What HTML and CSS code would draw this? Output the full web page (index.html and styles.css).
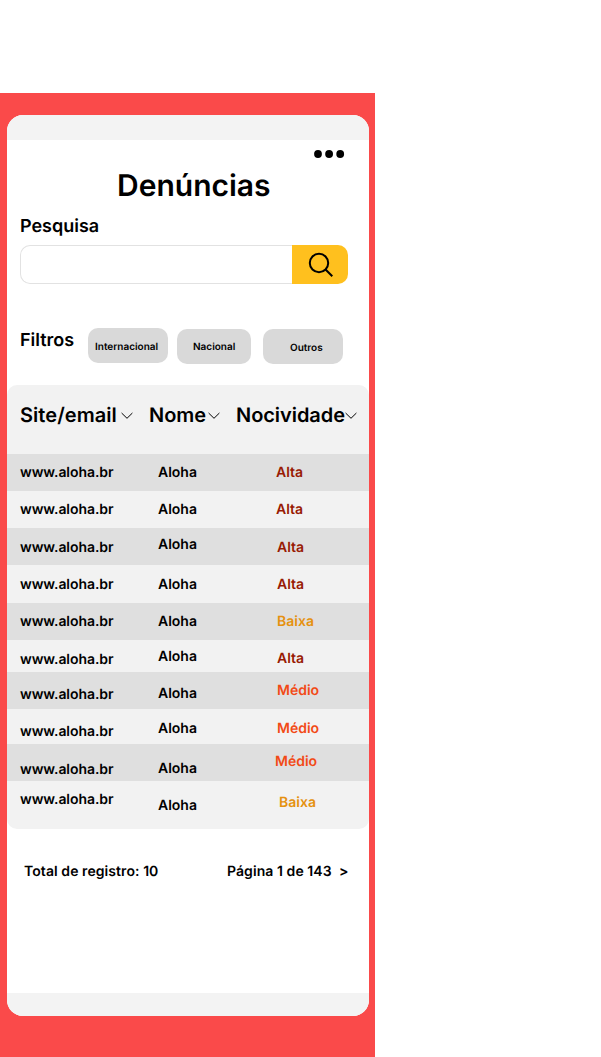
FILE: index.html
```html
<!DOCTYPE html>
<html lang="pt-BR">
<head>
<meta charset="utf-8">
<title>Denúncias</title>
<link rel="stylesheet" href="styles.css">
</head>
<body>
<div class="stage">
  <main class="card">
    <div class="bar bar-top"></div>
    <div class="menu"><svg width="32" height="10" viewBox="0 0 32 10"><circle cx="5" cy="5" r="3.9"/><circle cx="16.1" cy="5" r="3.9"/><circle cx="27.2" cy="5" r="3.9"/></svg></div>
    <h1>Denúncias</h1>
    <h2 class="search-label">Pesquisa</h2>
    <div class="search">
      <div class="search-field"></div>
      <div class="search-button"><svg width="26" height="26" viewBox="0 0 26 26"><circle cx="11" cy="11" r="9.2"/><path d="M17.3 17.3L24.3 24.3"/></svg></div>
    </div>
    <div class="filters">
      <h2>Filtros</h2>
      <div class="pill pill-int">Internacional</div>
      <div class="pill pill-nac">Nacional</div>
      <div class="pill pill-out">Outros</div>
    </div>
    <section class="table">
      <div class="head">
        <span class="h-site">Site/email</span><svg class="chev chev-site" width="12" height="8" viewBox="0 0 12 8"><path d="M.6 1L6 6.3L11.4 1"/></svg>
        <span class="h-nome">Nome</span><svg class="chev chev-nome" width="12" height="8" viewBox="0 0 12 8"><path d="M.6 1L6 6.3L11.4 1"/></svg>
        <span class="h-noc">Nocividade</span><svg class="chev" width="12" height="8" viewBox="0 0 12 8"><path d="M.6 1L6 6.3L11.4 1"/></svg>
      </div>
      <div class="row r37 dark"><span class="site t9">www.aloha.br</span><span class="t9">Aloha</span><span class="t9 x1 alta">Alta</span></div>
      <div class="row r37"><span class="site t9">www.aloha.br</span><span class="t9">Aloha</span><span class="t9 x1 alta">Alta</span></div>
      <div class="row r37 dark"><span class="site t10">www.aloha.br</span><span class="t7">Aloha</span><span class="t10 x2 alta">Alta</span></div>
      <div class="row r38"><span class="site t10">www.aloha.br</span><span class="t10">Aloha</span><span class="t10 x2 alta">Alta</span></div>
      <div class="row r37 dark"><span class="site t9">www.aloha.br</span><span class="t9">Aloha</span><span class="t9 x2 baixa">Baixa</span></div>
      <div class="row r32"><span class="site t10">www.aloha.br</span><span class="t7">Aloha</span><span class="t9 x2 alta">Alta</span></div>
      <div class="row r37 dark"><span class="site t13">www.aloha.br</span><span class="t12">Aloha</span><span class="t9 x2 medio">Médio</span></div>
      <div class="row r35"><span class="site t13">www.aloha.br</span><span class="t10">Aloha</span><span class="t10 x2 medio">Médio</span></div>
      <div class="row r37 dark"><span class="site t16">www.aloha.br</span><span class="t15">Aloha</span><span class="t8 x0 medio">Médio</span></div>
      <div class="row r48"><span class="site t9">www.aloha.br</span><span class="t15">Aloha</span><span class="t12 x4 baixa">Baixa</span></div>
    </section>
    <footer class="pager"><span>Total de registro: 10</span><span class="page">Página 1 de 143&nbsp; &gt;</span></footer>
    <div class="bar bar-bottom"></div>
  </main>
</div>
</body>
</html>
```

FILE: styles.css
```css
* { box-sizing: border-box; }
body { margin: 0; padding-top: 93px; background: #fff; color: #000; font-family: Inter, sans-serif; font-weight: 600; text-rendering: geometricPrecision; }
h1, h2 { margin: 0; font-weight: 600; white-space: nowrap; }
h2 { font-size: 18px; line-height: 22px; }
.stage { width: 375px; height: 964px; padding: 22px 6px 0 7px; background: #fa4a4a; }
.card { display: flex; flex-direction: column; height: 901px; border-radius: 16px; overflow: hidden; background: #fff; }
.bar { flex: none; background: #f3f3f3; }
.bar-top { height: 25px; }
.bar-bottom { height: 23px; margin-top: auto; }
.menu { display: flex; height: 25px; padding: 9px 0 0 306px; }
h1 { height: 40px; padding-left: 110px; font-size: 30px; line-height: 42px; }
.search-label { margin: 11px 0 7px 13px; }
.search { display: flex; width: 328px; height: 39px; margin-left: 13px; }
.search-field { flex: 1; border: 1px solid #e2e2e2; border-right: 0; border-radius: 10px 0 0 10px; }
.search-button { width: 56px; padding: 7px 0 0 16px; border-radius: 0 10px 10px 0; background: #ffc01e; }
.search-button svg { display: block; fill: none; stroke: #000; stroke-width: 2; }
.filters { display: flex; height: 37px; margin-top: 44px; padding-left: 13px; }
.filters h2 { width: 68px; padding-top: 2px; }
.pill { height: 35px; border-radius: 10px; background: #d9d9d9; font-size: 10px; line-height: 38px; white-space: nowrap; }
.pill-int { width: 80px; margin-top: .4px; padding-left: 7px; }
.pill-nac { width: 74px; margin: 1.4px 0 0 9px; padding-left: 16px; line-height: 36px; }
.pill-out { width: 80px; margin: 1.4px 0 0 12px; padding-left: 27px; }
.table { height: 444px; margin-top: 20px; border-radius: 10px; overflow: hidden; background: #f2f2f2; }
.head { display: flex; height: 69px; padding: 18px 0 0 13px; font-size: 20px; line-height: 25px; }
.h-site { width: 101px; letter-spacing: .05px; }
.h-nome { width: 59px; }
.h-noc { width: 109px; letter-spacing: -.05px; }
.chev { flex: none; margin-top: 9px; fill: none; stroke: #000; stroke-width: 1; }
.chev-site { margin-right: 16px; }
.chev-nome { margin-right: 16px; }
.row { display: grid; grid-template-columns: 138px 117px 1fr; padding-left: 13px; font-size: 14px; line-height: 20px; }
.site { letter-spacing: -.07px; }
.dark { background: #dfdfdf; }
.r32 { height: 32px; }
.r35 { height: 35px; }
.r37 { height: 37px; }
.r38 { height: 38px; }
.r48 { height: 48px; }
.t7 { padding-top: 7px; }
.t8 { padding-top: 8px; }
.t9 { padding-top: 9px; }
.t10 { padding-top: 10px; }
.t12 { padding-top: 12px; }
.t13 { padding-top: 13px; }
.t15 { padding-top: 15px; }
.t16 { padding-top: 16px; }
.x0 { padding-left: 0; }
.x1 { padding-left: 1px; }
.x2 { padding-left: 2px; }
.x4 { padding-left: 4px; }
.alta { color: #981b04; }
.baixa { color: #e5910f; }
.medio { color: #f24a16; }
.pager { display: flex; margin-top: 33px; padding-left: 17px; font-size: 14px; line-height: 20px; letter-spacing: .07px; }
.pager span { width: 203px; white-space: nowrap; }
.pager .page { width: auto; }
```
